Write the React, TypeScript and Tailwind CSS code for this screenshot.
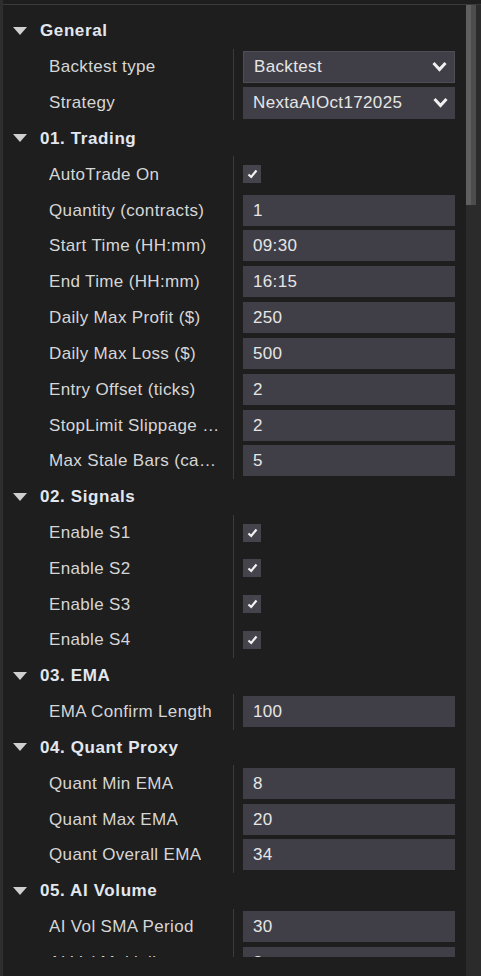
import React from "react";

type Row =
  | { label: string; kind: "select"; value: string; focused?: boolean }
  | { label: string; kind: "check" }
  | { label: string; kind: "text"; value: string };

type Section = { title: string; rows: Row[] };

const sections: Section[] = [
  {
    title: "General",
    rows: [
      { label: "Backtest type", kind: "select", value: "Backtest", focused: true },
      { label: "Strategy", kind: "select", value: "NextaAIOct172025" },
    ],
  },
  {
    title: "01. Trading",
    rows: [
      { label: "AutoTrade On", kind: "check" },
      { label: "Quantity (contracts)", kind: "text", value: "1" },
      { label: "Start Time (HH:mm)", kind: "text", value: "09:30" },
      { label: "End Time (HH:mm)", kind: "text", value: "16:15" },
      { label: "Daily Max Profit ($)", kind: "text", value: "250" },
      { label: "Daily Max Loss ($)", kind: "text", value: "500" },
      { label: "Entry Offset (ticks)", kind: "text", value: "2" },
      { label: "StopLimit Slippage (ticks)", kind: "text", value: "2" },
      { label: "Max Stale Bars (cancel)", kind: "text", value: "5" },
    ],
  },
  {
    title: "02. Signals",
    rows: [
      { label: "Enable S1", kind: "check" },
      { label: "Enable S2", kind: "check" },
      { label: "Enable S3", kind: "check" },
      { label: "Enable S4", kind: "check" },
    ],
  },
  {
    title: "03. EMA",
    rows: [{ label: "EMA Confirm Length", kind: "text", value: "100" }],
  },
  {
    title: "04. Quant Proxy",
    rows: [
      { label: "Quant Min EMA", kind: "text", value: "8" },
      { label: "Quant Max EMA", kind: "text", value: "20" },
      { label: "Quant Overall EMA", kind: "text", value: "34" },
    ],
  },
  {
    title: "05. AI Volume",
    rows: [
      { label: "AI Vol SMA Period", kind: "text", value: "30" },
      { label: "AI Vol Multiplier", kind: "text", value: "2" },
    ],
  },
];

const font = { fontFamily: '"Liberation Sans", Arial, sans-serif' };

function Triangle() {
  return (
    <svg width="14" height="8" viewBox="0 0 14 8" className="shrink-0">
      <polygon points="0,0 14,0 7,8" fill="#cfcfcf" />
    </svg>
  );
}

function Chevron() {
  return (
    <svg width="15" height="11" viewBox="0 0 15 11" className="shrink-0">
      <polyline
        points="1.5,2 7.5,8.5 13.5,2"
        fill="none"
        stroke="#f0f0f0"
        strokeWidth="3"
        strokeLinejoin="miter"
      />
    </svg>
  );
}

function Value({ row }: { row: Row }) {
  if (row.kind === "check") {
    return (
      <div className="w-[18px] h-[18px] bg-[#45444c] flex items-center justify-center">
        <svg width="11" height="10" viewBox="0 0 11 10">
          <polyline
            points="1.5,5.5 4.2,8 9.5,1.5"
            fill="none"
            stroke="#f2f2f2"
            strokeWidth="2.2"
          />
        </svg>
      </div>
    );
  }
  if (row.kind === "select") {
    return (
      <div
        className={
          "w-[212px] h-[32px] bg-[#403f47] flex items-center justify-between pl-[10px] pr-[7px] text-[#e6e6e6] " +
          (row.focused ? "border border-[#4f4e56] pl-[9px]" : "")
        }
      >
        <span className="text-[17px] tracking-[0.35px] leading-none">{row.value}</span>
        <Chevron />
      </div>
    );
  }
  return (
    <div className="w-[212px] h-[31px] bg-[#403f47] flex items-center pl-[10px] text-[#e6e6e6]">
      <span className="text-[17px] tracking-[0.35px] leading-none">{row.value}</span>
    </div>
  );
}

function SectionBlock({ s }: { s: Section }) {
  return (
    <div>
      <div className="h-[35.83px] flex items-center">
        <div className="w-[37px] pl-[9.7px] flex items-center">
          <Triangle />
        </div>
        <span className="text-[17px] font-bold tracking-[0.6px] text-[#e3e7ef] leading-none">
          {s.title}
        </span>
      </div>
      <div className="flex mt-[-3px] mb-[-3px] py-[3px]">
        <div className="w-[230px] shrink-0">
          {s.rows.map((r, i) => (
            <div key={i} className="h-[35.83px] flex items-center pl-[46px] pr-[8px]">
              <span className="text-[17px] tracking-[0.35px] text-[#d6d6d6] leading-none truncate">
                {r.label}
              </span>
            </div>
          ))}
        </div>
        <div className="border-l border-[#3b3b3b] pl-[9px]">
          {s.rows.map((r, i) => (
            <div key={i} className="h-[35.83px] flex items-center">
              <Value row={r} />
            </div>
          ))}
        </div>
      </div>
    </div>
  );
}

export default function App() {
  return (
    <div className="w-[481px] h-[976px] bg-[#1e1e1e] flex overflow-hidden" style={font}>
      <div className="w-[3px] shrink-0 bg-[#2e2e2e]" />
      <div className="flex-1 flex flex-col">
        <div className="h-[4px] shrink-0" />
        <div className="h-[1px] shrink-0 bg-[#3a3a3a]" />
        <div className="flex flex-1 min-h-0">
          <div className="flex-1 flex flex-col">
            <div className="h-[952px] overflow-hidden pt-[8px]">
              {sections.map((s, i) => (
                <SectionBlock key={i} s={s} />
              ))}
            </div>
          </div>
          <div className="w-[15px] shrink-0 bg-[#2b2b2b] flex">
            <div className="w-[10px] h-[200px] flex">
              <div className="w-[5px] bg-[#5f5f5f]" />
              <div className="w-[5px] bg-[#4d4d4d]" />
            </div>
          </div>
        </div>
      </div>
    </div>
  );
}
